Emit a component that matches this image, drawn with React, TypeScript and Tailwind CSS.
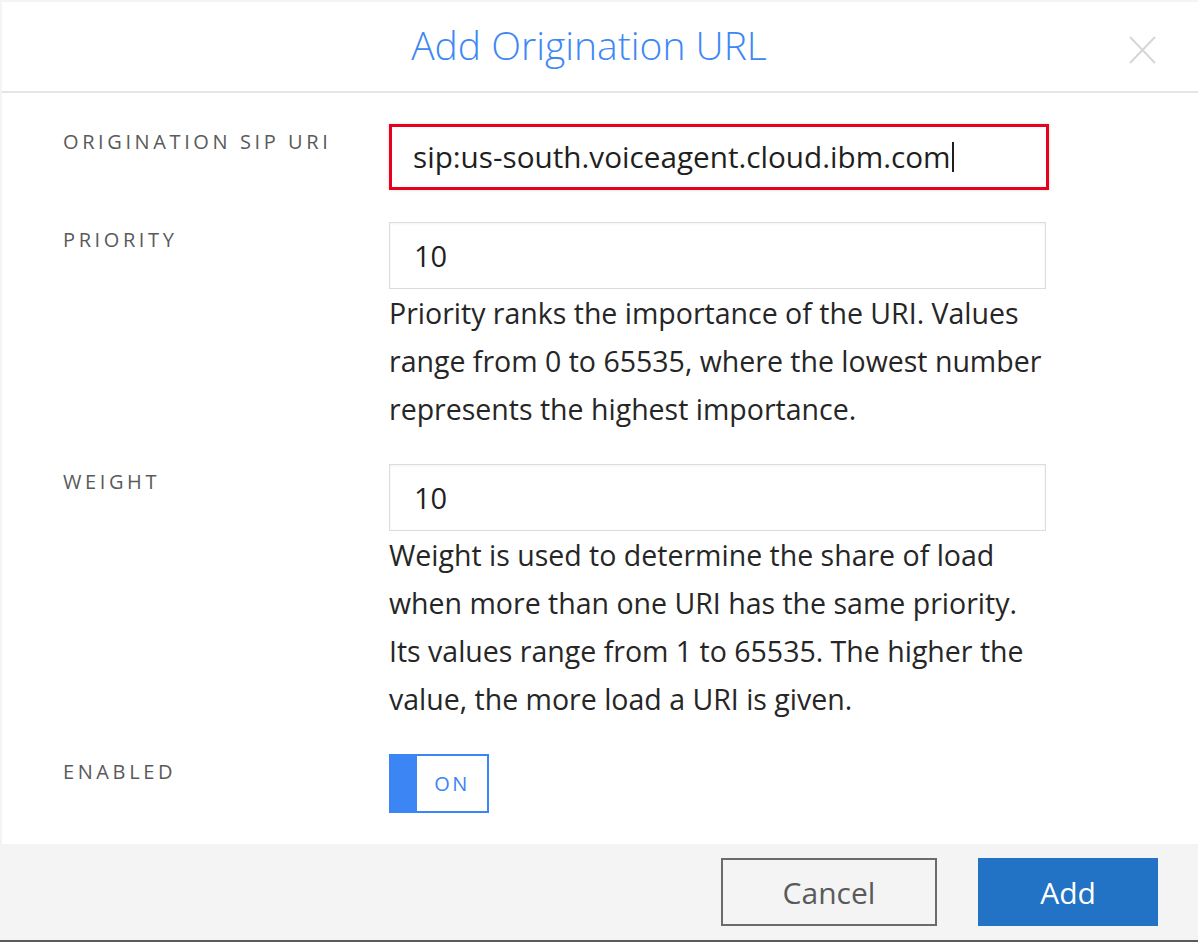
const font = { fontFamily: '"Open Sans", "Liberation Sans", sans-serif' };

function Label({ children }: { children: string }) {
  return (
    <div className="w-[387px] shrink-0 pl-[61px] pt-[3px] text-[20px] leading-[30px] tracking-[0.18em] text-[#5a5a5a]">
      {children}
    </div>
  );
}

function Help({ children }: { children: string }) {
  return <p className="w-[655px] text-[28.5px] leading-[48px] text-[#262626]">{children}</p>;
}

export default function App() {
  return (
    <div className="w-[1198px] h-[942px] bg-[#f4f4f4] flex flex-col overflow-hidden" style={font}>
      {/* header */}
      <div className="ml-[2px] mt-[2px] h-[91px] shrink-0 bg-white border-b-2 border-[#e5e5e5] relative flex items-center justify-center">
        <h1 className="text-[39px] font-light text-[#3d88f4] -mt-[2px] -ml-[22px]">Add Origination URL</h1>
        <button className="absolute right-[41px] top-[33px] w-[30px] h-[30px] flex items-center justify-center">
          <svg width="27" height="28" viewBox="0 0 27 28" fill="none" stroke="#d6d6d6" strokeWidth="2">
            <path d="M1 1 L26 27 M26 1 L1 27" />
          </svg>
        </button>
      </div>

      {/* body */}
      <div className="ml-[2px] h-[751px] shrink-0 bg-white pt-[31px] flex flex-col">
        <div className="flex">
          <Label>ORIGINATION SIP URI</Label>
          <div className="w-[660px] h-[66px] border-[3px] border-[#e8001c] shadow-[0_0_3px_rgba(0,0,0,0.15)] flex items-center pl-[21px] text-[29.7px] text-[#1f1f1f]">
            sip:us-south.voiceagent.cloud.ibm.com
            <span className="inline-block w-[2px] h-[30px] bg-[#1f1f1f] ml-[1px]" />
          </div>
        </div>

        <div className="flex mt-[32px]">
          <Label>PRIORITY</Label>
          <div className="flex flex-col">
            <div className="w-[657px] h-[67px] border border-[#dcdcdc] shadow-[inset_0_1px_3px_rgba(0,0,0,0.05)] flex items-center pl-[24px] text-[29px] text-[#1f1f1f]">
              10
            </div>
            <Help>Priority ranks the importance of the URI. Values range from 0 to 65535, where the lowest number represents the highest importance.</Help>
          </div>
        </div>

        <div className="flex mt-[31px]">
          <Label>WEIGHT</Label>
          <div className="flex flex-col">
            <div className="w-[657px] h-[67px] border border-[#dcdcdc] shadow-[inset_0_1px_3px_rgba(0,0,0,0.05)] flex items-center pl-[24px] text-[29px] text-[#1f1f1f]">
              10
            </div>
            <Help>Weight is used to determine the share of load when more than one URI has the same priority. Its values range from 1 to 65535. The higher the value, the more load a URI is given.</Help>
          </div>
        </div>

        <div className="flex mt-[31px]">
          <Label>ENABLED</Label>
          <div className="w-[100px] h-[59px] border-2 border-[#3b85f5] flex">
            <div className="w-[26px] bg-[#3b85f5]" />
            <div className="flex-1 flex items-center justify-center text-[20px] tracking-[0.12em] text-[#3b85f5]">ON</div>
          </div>
        </div>
      </div>

      {/* footer */}
      <div className="h-[98px] shrink-0 bg-[#f4f4f4] border-b-2 border-[#5a5a5a] flex items-start justify-end gap-[41px] pt-[14px] pr-[40px]">
        <button className="w-[216px] h-[68px] border-2 border-[#6b6b6b] text-[30px] text-[#5a5a5a]">Cancel</button>
        <button className="w-[180px] h-[68px] bg-[#2272c6] text-[30px] text-white">Add</button>
      </div>
    </div>
  );
}
